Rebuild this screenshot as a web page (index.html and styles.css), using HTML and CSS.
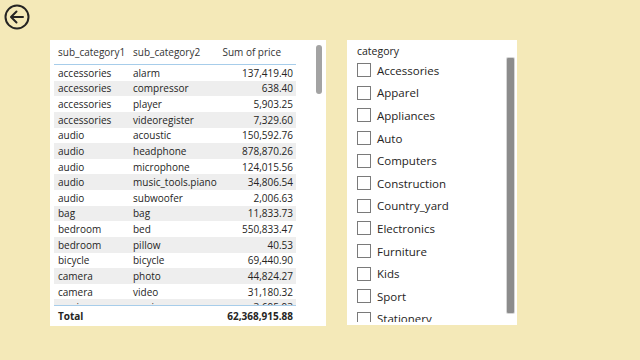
FILE: index.html
```html
<!DOCTYPE html>
<html lang="en">
<head>
    <meta charset="UTF-8">
    <meta name="viewport" content="width=device-width, initial-scale=1.0">
    <title>Sales report</title>
    <link rel="stylesheet" href="styles.css">
</head>
<body>
    <div class="top-bar">
        <button type="button" class="back-button" aria-label="Back">
            <svg width="26" height="26" viewBox="0 0 26 26">
                <circle cx="13" cy="13" r="11.5" fill="none" stroke="#252423" stroke-width="2"/>
                <path d="M19 13H7.5M12.5 7.5L7 13l5.5 5.5" fill="none" stroke="#252423" stroke-width="2" stroke-linecap="round" stroke-linejoin="round"/>
            </svg>
        </button>
    </div>
    <div class="canvas">
        <div class="card table-card">
            <div class="table">
                <div class="row header">
                    <div>sub_category1</div>
                    <div>sub_category2</div>
                    <div class="num">Sum of price</div>
                </div>
                <div class="rows">
                    <div class="row"><div>accessories</div><div>alarm</div><div class="num">137,419.40</div></div>
                    <div class="row"><div>accessories</div><div>compressor</div><div class="num">638.40</div></div>
                    <div class="row"><div>accessories</div><div>player</div><div class="num">5,903.25</div></div>
                    <div class="row"><div>accessories</div><div>videoregister</div><div class="num">7,329.60</div></div>
                    <div class="row"><div>audio</div><div>acoustic</div><div class="num">150,592.76</div></div>
                    <div class="row"><div>audio</div><div>headphone</div><div class="num">878,870.26</div></div>
                    <div class="row"><div>audio</div><div>microphone</div><div class="num">124,015.56</div></div>
                    <div class="row"><div>audio</div><div>music_tools.piano</div><div class="num">34,806.54</div></div>
                    <div class="row"><div>audio</div><div>subwoofer</div><div class="num">2,006.63</div></div>
                    <div class="row"><div>bag</div><div>bag</div><div class="num">11,833.73</div></div>
                    <div class="row"><div>bedroom</div><div>bed</div><div class="num">550,833.47</div></div>
                    <div class="row"><div>bedroom</div><div>pillow</div><div class="num">40.53</div></div>
                    <div class="row"><div>bicycle</div><div>bicycle</div><div class="num">69,440.90</div></div>
                    <div class="row"><div>camera</div><div>photo</div><div class="num">44,824.27</div></div>
                    <div class="row"><div>camera</div><div>video</div><div class="num">31,180.32</div></div>
                    <div class="row"><div>carriage</div><div>carriage</div><div class="num">3,695.93</div></div>
                </div>
                <div class="row total">
                    <div>Total</div>
                    <div></div>
                    <div class="num">62,368,915.88</div>
                </div>
            </div>
            <div class="scroll-track">
                <div class="scroll-thumb table-thumb"></div>
            </div>
        </div>

        <div class="card slicer-card">
            <div class="slicer">
                <div class="slicer-title">category</div>
                <div class="slicer-list">
                    <label class="item"><span class="box"></span>Accessories</label>
                    <label class="item"><span class="box"></span>Apparel</label>
                    <label class="item"><span class="box"></span>Appliances</label>
                    <label class="item"><span class="box"></span>Auto</label>
                    <label class="item"><span class="box"></span>Computers</label>
                    <label class="item"><span class="box"></span>Construction</label>
                    <label class="item"><span class="box"></span>Country_yard</label>
                    <label class="item"><span class="box"></span>Electronics</label>
                    <label class="item"><span class="box"></span>Furniture</label>
                    <label class="item"><span class="box"></span>Kids</label>
                    <label class="item"><span class="box"></span>Sport</label>
                    <label class="item"><span class="box"></span>Stationery</label>
                </div>
            </div>
            <div class="scroll-track slicer-track">
                <div class="scroll-thumb slicer-thumb"></div>
            </div>
        </div>
    </div>
</body>
</html>
```
FILE: styles.css
```css
body {
    margin: 0;
    width: 640px;
    height: 360px;
    background-color: #f4e9b8; /* 畫布底色 */
    font-family: "Open Sans", "Noto Sans", sans-serif;
    color: #252423;
    overflow: hidden;
}
.top-bar {
    height: 40px;
    padding: 4px 0 0 4px;
    box-sizing: border-box;
}
.back-button {
    display: block;
    width: 26px;
    height: 26px;
    padding: 0;
    border: none;
    background: none;
    cursor: pointer;
}
.back-button svg {
    display: block;
}
.canvas {
    display: flex;
    gap: 21px;
    padding-left: 50px;
}
.card {
    background-color: #ffffff;
    display: flex;
    box-sizing: border-box;
}
.table-card {
    width: 276px;
    height: 286px;
    padding: 4px 4px 0 4px;
}
.table {
    width: 242px;
    display: flex;
    flex-direction: column;
    font-size: 10px;
}
.row {
    display: grid;
    grid-template-columns: 75px 1fr auto;
    padding: 0 3px 0 4px;
    align-items: center;
    height: 15.64px;
    white-space: nowrap;
}
.row .num {
    text-align: right;
}
.header {
    height: 16px;
    padding-bottom: 4px;
    border-bottom: 1px solid #a7cdea;
    color: #333333;
}
.header .num {
    padding-right: 12px;
}
.rows {
    height: 240px;
    overflow: hidden;
    border-bottom: 1px solid #a7cdea;
}
.rows .row:nth-child(even) {
    background-color: #eeeeee;
}
.total {
    height: 20px;
    font-weight: bold;
}
.scroll-track {
    margin-left: auto;
    width: 6px;
    padding-top: 1px;
}
.scroll-thumb {
    border-radius: 3px;
    background-color: #a3a3a3;
}
.table-thumb {
    height: 49px;
}
.slicer-card {
    width: 170px;
    height: 285px;
    padding: 5px 3px 0 10px;
}
.slicer {
    flex: 1;
    overflow: hidden;
}
.slicer-title {
    font-size: 10.5px;
    height: 14px;
    line-height: 12px;
}
.slicer-list {
    height: 263px;
    overflow: hidden;
}
.item {
    display: flex;
    align-items: center;
    gap: 6px;
    height: 22.6px;
    font-size: 11.5px;
    white-space: nowrap;
}
.box {
    width: 12px;
    height: 12px;
    border: 1px solid #7a7a7a;
    flex-shrink: 0;
}
.slicer-track {
    width: 7px;
    padding-top: 13px;
}
.slicer-thumb {
    height: 255px;
    border-radius: 1px;
    background-color: #8c8c8c;
    box-shadow: 0 0 0 1px #d6d6d6;
}
```
